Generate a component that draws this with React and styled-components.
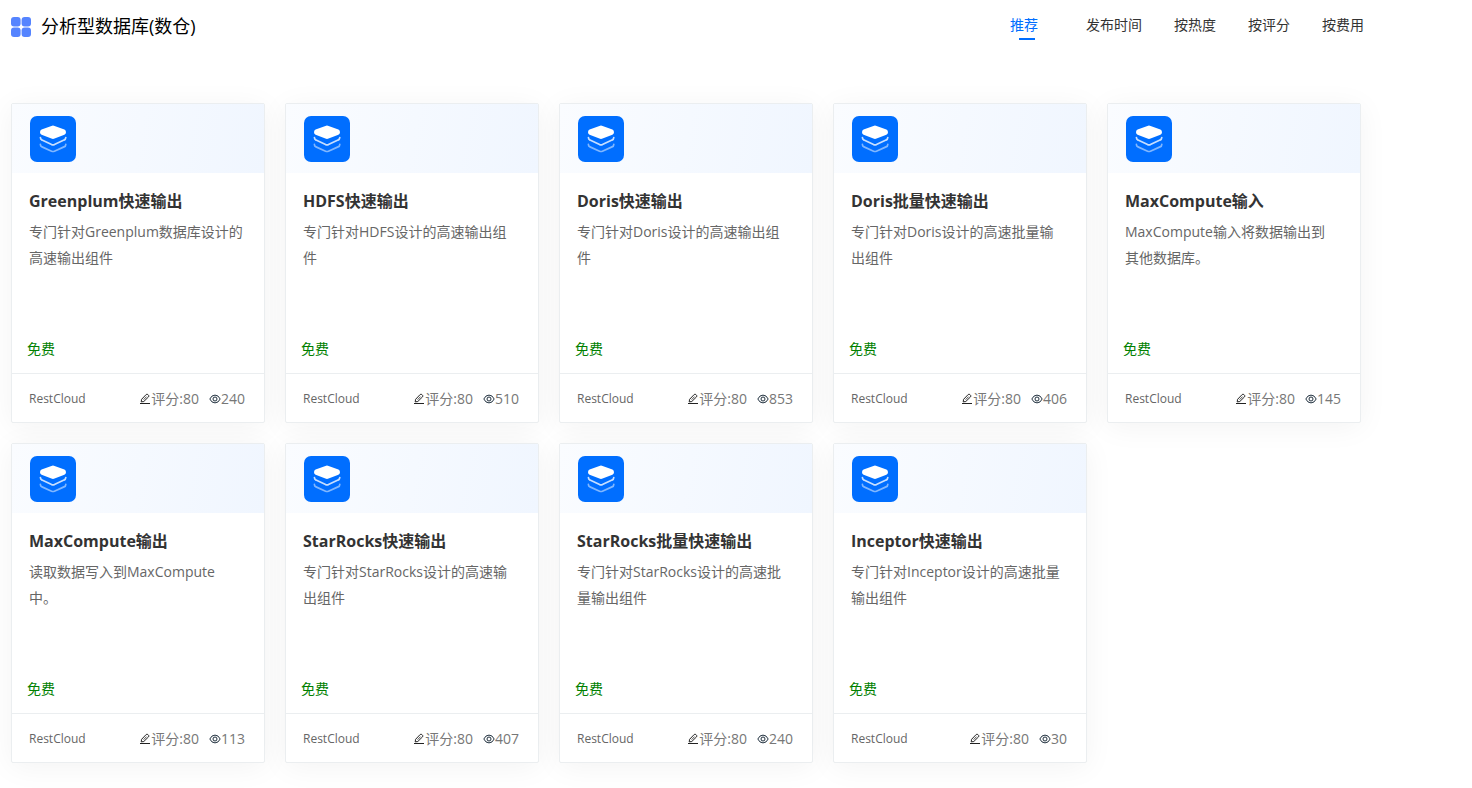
import React from "react";
import styled, { createGlobalStyle, css } from "styled-components";

const GlobalStyle = createGlobalStyle`
  *, *::before, *::after { box-sizing: border-box; }
  body {
    margin: 0;
    background: #fff;
    color: #333;
    font-family: "Open Sans", "Noto Sans CJK SC", sans-serif;
    font-size: 14px;
  }
`;

const Page = styled.main`
  padding: 11px 11px 25px;
`;

const TopBar = styled.header`
  display: flex;
  flex-wrap: wrap;
  align-items: flex-start;
  justify-content: space-between;
  gap: 12px;
  margin-bottom: 62px;
  padding-right: 97px;
`;

const Heading = styled.h1`
  display: flex;
  align-items: center;
  gap: 10px;
  margin: 0;
  color: #000;
  font-size: 18px;
  font-weight: 400;
  line-height: 30px;
`;

const SortList = styled.ul`
  display: flex;
  gap: 32px;
  margin: 0;
  padding: 0;
  list-style: none;
`;

const SortButton = styled.button`
  position: relative;
  display: block;
  padding: 0;
  border: 0;
  background: none;
  color: #333;
  font: inherit;
  line-height: 28px;
  cursor: pointer;

  ${({ $active }) =>
    $active &&
    css`
      padding-right: 16px;
      color: #006eff;

      &::after {
        content: "";
        position: absolute;
        left: 9px;
        bottom: -1px;
        width: 16px;
        height: 2px;
        background: #006eff;
      }
    `}
`;

const CardGrid = styled.section`
  display: grid;
  grid-template-columns: repeat(auto-fill, 254px);
  gap: 20px;
`;

const Card = styled.article`
  display: flex;
  flex-direction: column;
  min-height: 320px;
  border: 1px solid #ebeef0;
  border-radius: 2px;
  background: #fff;
  box-shadow: 0 4px 30px rgba(0, 0, 0, 0.05);
`;

const CardBanner = styled.div`
  padding: 12px 18px 11px;
  background: linear-gradient(100deg, #fafcff, #f0f6ff);
  line-height: 0;
`;

const CardBody = styled.div`
  flex: 1;
  padding: 14px 19px 0 17px;
`;

const CardTitle = styled.h2`
  margin: 0;
  color: #333;
  font-size: 16px;
  font-weight: 700;
  line-height: 28px;
`;

const Description = styled.p`
  margin: 4px 0 0;
  color: #666;
  line-height: 26px;
  white-space: pre-line;
`;

const Price = styled.div`
  padding: 0 15px 14px;
  color: #008000;
  line-height: 20px;
`;

const CardFooter = styled.footer`
  display: flex;
  align-items: center;
  justify-content: space-between;
  height: 49px;
  padding: 0 19px 0 17px;
  border-top: 1px solid #ebeef0;
  color: #666;
`;

const Vendor = styled.span`
  font-size: 12px;
`;

const Stats = styled.div`
  display: flex;
  gap: 10px;
  color: #777;
`;

const Stat = styled.span`
  display: flex;
  align-items: center;

  svg {
    margin-top: 2px;
  }
`;

const TilesIcon = () => (
  <svg width="20" height="22" viewBox="0 -2 20 22" fill="#5584ff" aria-hidden="true">
    <rect x="0" y="0" width="9.6" height="9.6" rx="3" />
    <rect x="10.6" y="0" width="9.4" height="9.6" rx="3" />
    <rect x="0" y="10.6" width="9.6" height="9.4" rx="3" />
    <rect x="10.6" y="10.6" width="9.4" height="9.4" rx="3" />
  </svg>
);

const LayersIcon = () => (
  <svg width="46" height="46" viewBox="0 0 46 46" fill="none" aria-hidden="true">
    <rect width="46" height="46" rx="7" fill="#006eff" />
    <path
      d="M21.4 9.9Q23 9.2 24.6 9.9L34.4 13.6Q36 14.4 36 16.3Q36 18 34.4 18.8L24.6 22.6Q23 23.2 21.4 22.6L11.6 18.8Q10 18 10 16.3Q10 14.4 11.6 13.6Z"
      fill="#fff"
    />
    <g stroke="#fff" strokeWidth="1.7" strokeLinecap="round" strokeLinejoin="round">
      <path d="M10.4 21.6Q10.4 23.4 12 24.1L21.6 28.6Q23 29.2 24.4 28.6L34 24.1Q35.8 23.4 35.8 21.6" strokeOpacity="0.78" />
      <path d="M10.4 28.4Q10.4 30.2 12 30.9L21.6 35.2Q23 35.8 24.4 35.2L34 30.9Q35.8 30.2 35.8 28.4" strokeOpacity="0.5" />
    </g>
  </svg>
);

const PencilIcon = () => (
  <svg width="12" height="12" viewBox="0 0 12 12" fill="none" stroke="#222" aria-hidden="true">
    <path
      d="M2.2 8.9L2.6 6.3L7.2 1.5Q8 0.8 8.8 1.5L9.6 2.3Q10.2 3.1 9.5 3.9L4.8 8.5Z"
      strokeWidth="1"
      strokeLinejoin="round"
    />
    <path d="M4.6 6.7L7.6 3.6" strokeWidth="0.8" />
    <path d="M1 10.5H11" strokeWidth="1" />
  </svg>
);

const EyeIcon = () => (
  <svg width="12" height="12" viewBox="0 0 12 12" fill="none" stroke="#1f2f3d" aria-hidden="true">
    <path d="M0.8 6Q2.6 2.1 6 2.1T11.2 6Q9.4 9.9 6 9.9T0.8 6Z" strokeWidth="1" strokeLinejoin="round" />
    <circle cx="6" cy="6" r="2" strokeWidth="1" />
  </svg>
);

const sortOptions = ["推荐", "发布时间", "按热度", "按评分", "按费用"];

const components = [
  { title: "Greenplum快速输出", text: "专门针对Greenplum数据库设计的高速输出组件", views: 240 },
  { title: "HDFS快速输出", text: "专门针对HDFS设计的高速输出组件", views: 510 },
  { title: "Doris快速输出", text: "专门针对Doris设计的高速输出组件", views: 853 },
  { title: "Doris批量快速输出", text: "专门针对Doris设计的高速批量输出组件", views: 406 },
  { title: "MaxCompute输入", text: "MaxCompute输入将数据输出到\n其他数据库。", views: 145 },
  { title: "MaxCompute输出", text: "读取数据写入到MaxCompute\n中。", views: 113 },
  { title: "StarRocks快速输出", text: "专门针对StarRocks设计的高速输出组件", views: 407 },
  { title: "StarRocks批量快速输出", text: "专门针对StarRocks设计的高速批量输出组件", views: 240 },
  { title: "Inceptor快速输出", text: "专门针对Inceptor设计的高速批量输出组件", views: 30 },
];

function ComponentCard({ title, text, views }) {
  return (
    <Card>
      <CardBanner>
        <LayersIcon />
      </CardBanner>
      <CardBody>
        <CardTitle>{title}</CardTitle>
        <Description>{text}</Description>
      </CardBody>
      <Price>免费</Price>
      <CardFooter>
        <Vendor>RestCloud</Vendor>
        <Stats>
          <Stat>
            <PencilIcon />
            评分:80
          </Stat>
          <Stat>
            <EyeIcon />
            {views}
          </Stat>
        </Stats>
      </CardFooter>
    </Card>
  );
}

export default function App() {
  return (
    <>
      <GlobalStyle />
      <Page>
        <TopBar>
          <Heading>
            <TilesIcon />
            分析型数据库(数仓)
          </Heading>
          <nav>
            <SortList>
              {sortOptions.map((label, i) => (
                <li key={label}>
                  <SortButton type="button" $active={i === 0}>
                    {label}
                  </SortButton>
                </li>
              ))}
            </SortList>
          </nav>
        </TopBar>
        <CardGrid>
          {components.map((item) => (
            <ComponentCard key={item.title} {...item} />
          ))}
        </CardGrid>
      </Page>
    </>
  );
}
